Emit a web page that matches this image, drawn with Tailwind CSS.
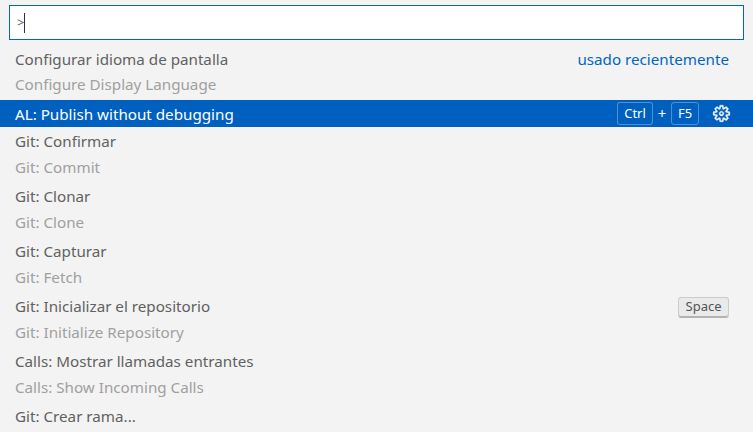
<!DOCTYPE html>
<html><head><meta charset="utf-8"><script src="https://cdn.jsdelivr.net/npm/@tailwindcss/browser@4"></script></head>
<body class="m-0 h-[432px] w-[753px] overflow-hidden bg-[#f3f3f3] font-['Noto_Sans',sans-serif] text-[15.2px] text-[#616161]">
<div class="px-[9px] pt-[5px] h-[45px]">
  <div class="h-[35px] border border-[#0066bf] bg-white pl-[7px] flex items-center text-[13px] leading-none text-[#616161]"><span>&gt;</span><span class="w-px h-[20px] bg-[#333]"></span></div>
</div>
<div class="flex flex-col">
  <div class="h-[55px] pl-[15px] pr-[24px] relative">
    <div class="h-[29px] flex items-center justify-between"><span>Configurar idioma de pantalla</span><span class="text-[#0066bf]">usado recientemente</span></div>
    <div class="h-[26px] leading-[21px] text-[#a0a0a0]">Configure Display Language</div>
  </div>
  <div class="h-[27px] bg-[#0060c0] text-white pl-[15px] pr-[22px] flex items-center">
    <span class="pt-px">AL: Publish without debugging</span>
    <div class="ml-auto flex items-center">
      <span class="h-[23px] w-[36px] rounded-[3px] border border-white/30 bg-[#0060c0] flex items-center justify-center text-[13px]">Ctrl</span>
      <span class="w-[18px] text-center text-[15px]">+</span>
      <span class="h-[23px] w-[28px] rounded-[3px] border border-white/30 flex items-center justify-center text-[13px]">F5</span>
      <svg class="ml-[13px]" width="19" height="19" viewBox="0 0 16 16" fill="white" stroke="white" stroke-width="0.3"><path fill-rule="evenodd" clip-rule="evenodd" d="M9.1 4.4L8.6 2H7.4l-.5 2.4-.7.3-2-1.3-.9.8 1.3 2-.2.7-2.4.5v1.2l2.4.5.3.8-1.3 2 .8.8 2-1.3.8.3.4 2.3h1.2l.5-2.4.8-.3 2 1.3.8-.8-1.3-2 .3-.8 2.3-.4V7.4l-2.4-.5-.3-.8 1.3-2-.8-.8-2 1.3-.7-.2zM9.4 1l.5 2.4L12 2.1l2 2-1.4 2.1 2.4.4v2.8l-2.4.5L14 12l-2 2-2.1-1.4-.5 2.4H6.6l-.5-2.4L4 13.9l-2-2 1.4-2.1L1 9.4V6.6l2.4-.5L2.1 4l2-2 2.1 1.4.4-2.4h2.8zm.6 7c0 1.1-.9 2-2 2s-2-.9-2-2 .9-2 2-2 2 .9 2 2zM8 9c.6 0 1-.4 1-1s-.4-1-1-1-1 .4-1 1 .4 1 1 1z"/></svg>
    </div>
  </div>
  <div class="h-[55px] pl-[15px]"><div class="h-[29px] flex items-center">Git: Confirmar</div><div class="h-[26px] leading-[23px] text-[#a0a0a0]">Git: Commit</div></div>
  <div class="h-[55px] pl-[15px]"><div class="h-[29px] flex items-center">Git: Clonar</div><div class="h-[26px] leading-[23px] text-[#a0a0a0]">Git: Clone</div></div>
  <div class="h-[55px] pl-[15px]"><div class="h-[29px] flex items-center">Git: Capturar</div><div class="h-[26px] leading-[23px] text-[#a0a0a0]">Git: Fetch</div></div>
  <div class="h-[55px] pl-[15px] pr-[24px]"><div class="h-[29px] flex items-center justify-between"><span>Git: Inicializar el repositorio</span><span class="h-[21px] w-[51px] mt-px rounded-[3px] border border-[#cccccc] border-b-[#b3b3b3] bg-[#dddddd]/40 shadow-[inset_0_-1px_0_#b3b3b3] flex items-center justify-center text-[13px] text-[#555]">Space</span></div><div class="h-[26px] leading-[23px] text-[#a0a0a0]">Git: Initialize Repository</div></div>
  <div class="h-[55px] pl-[15px]"><div class="h-[29px] flex items-center">Calls: Mostrar llamadas entrantes</div><div class="h-[26px] leading-[23px] text-[#a0a0a0]">Calls: Show Incoming Calls</div></div>
  <div class="h-[29px] pl-[15px] flex items-center">Git: Crear rama...</div>
</div>
</body></html>
